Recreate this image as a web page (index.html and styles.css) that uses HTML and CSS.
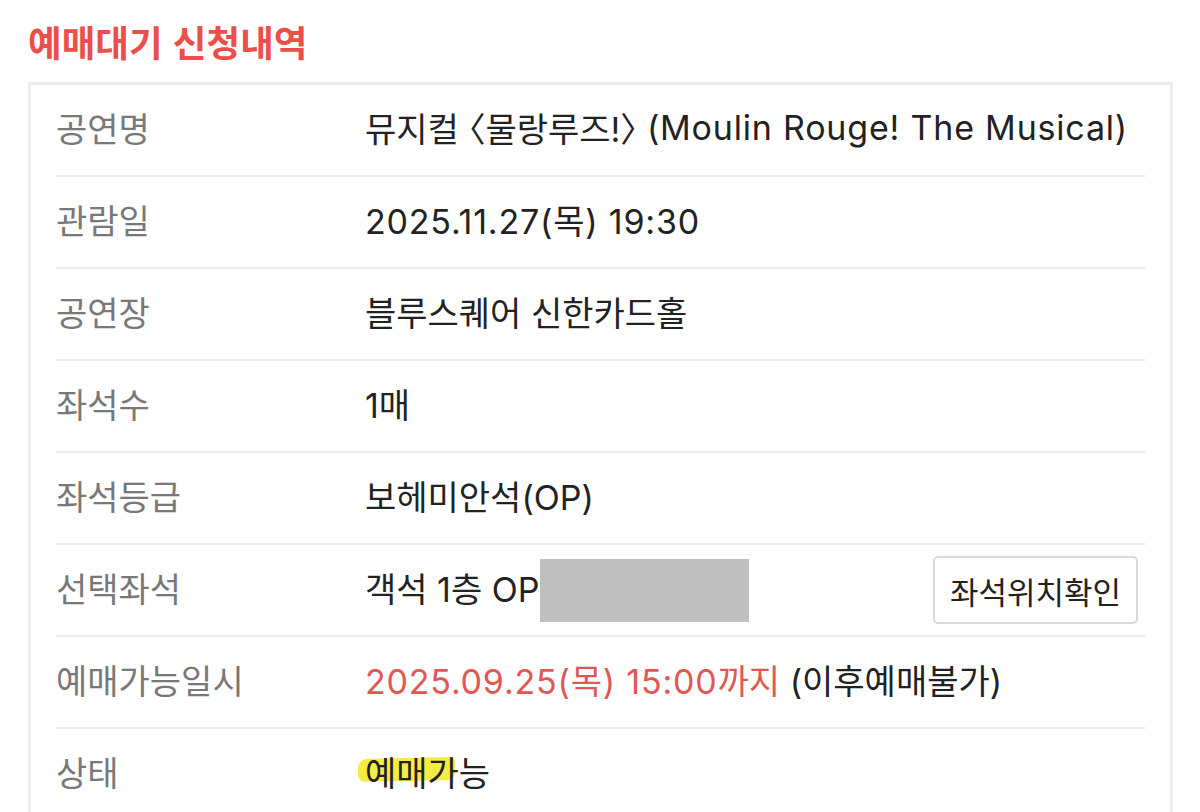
FILE: index.html
```html
<!DOCTYPE html>
<html lang="ko">
<head>
<meta charset="utf-8">
<title>예매대기 신청내역</title>
<link rel="stylesheet" href="styles.css">
</head>
<body>
<div class="page">
  <h1 class="title">예매대기 신청내역</h1>
  <div class="card">
    <div class="row">
      <div class="label">공연명</div>
      <div class="value">뮤지컬 〈물랑루즈!〉 <span class="en" lang="en">(Moulin Rouge! The Musical)</span></div>
    </div>
    <div class="row">
      <div class="label">관람일</div>
      <div class="value"><span class="en">2025.11.27(목) 19:30</span></div>
    </div>
    <div class="row">
      <div class="label">공연장</div>
      <div class="value">블루스퀘어 신한카드홀</div>
    </div>
    <div class="row">
      <div class="label">좌석수</div>
      <div class="value">1매</div>
    </div>
    <div class="row">
      <div class="label">좌석등급</div>
      <div class="value">보헤미안석(OP)</div>
    </div>
    <div class="row">
      <div class="label">선택좌석</div>
      <div class="value">
        <span>객석 1층 OP</span><span class="redact"></span>
        <button class="seat-btn" type="button">좌석위치확인</button>
      </div>
    </div>
    <div class="row">
      <div class="label">예매가능일시</div>
      <div class="value"><span class="deadline"><span class="en">2025.09.25(목) 15:00</span>까지</span>&nbsp;(이후예매불가)</div>
    </div>
    <div class="row">
      <div class="label">상태</div>
      <div class="value"><span class="hl">예매가능</span></div>
    </div>
  </div>
</div>
</body>
</html>
```
FILE: styles.css
```css
html, body {
  margin: 0;
  padding: 0;
  background: #ffffff;
}

body {
  font-family: "Inter", "Noto Sans CJK KR", sans-serif;
  color: #222222;
}

.page {
  padding: 22px 0 0 28px;
  width: 1145px;
}

.title {
  margin: 0 0 20px;
  font-family: "Noto Sans CJK KR", sans-serif;
  font-weight: 700;
  font-size: 36.6px;
  line-height: 40px;
  color: #eb4f4a;
}

.card {
  box-sizing: border-box;
  width: 1145px;
  border: 3px solid #ececec;
  padding: 0 25px;
}

.row {
  display: flex;
  align-items: center;
  height: 84px;
  padding-bottom: 6px;
  border-bottom: 2px solid #ececec;
}

.label {
  flex: none;
  width: 309px;
  font-family: "Noto Sans CJK KR", sans-serif;
  font-size: 34px;
  color: #787878;
}

.value {
  flex: 1;
  display: flex;
  align-items: center;
  white-space: pre;
  font-size: 34px;
  color: #222222;
  font-feature-settings: "halt";
}

.en {
  letter-spacing: 0.8px;
}

.redact {
  display: inline-block;
  width: 209px;
  height: 63px;
  margin-top: 6px;
  background: #c0c0c0;
}

.seat-btn {
  margin-left: auto;
  margin-right: 7px;
  margin-top: 6px;
  width: 205px;
  height: 68px;
  padding: 0;
  border: 2px solid #d8d8d8;
  border-radius: 5px;
  background: #ffffff;
  font-family: "Noto Sans CJK KR", sans-serif;
  font-size: 31px;
  color: #222222;
}

.deadline {
  color: #e25753;
}

.hl {
  position: relative;
  z-index: 0;
}

.hl::before {
  content: "";
  position: absolute;
  left: -7px;
  top: 11px;
  width: 97px;
  height: 23px;
  background: #f6ec45;
  border-radius: 10px 5px 8px 7px;
  transform: rotate(-1.2deg);
  z-index: -1;
}
```
